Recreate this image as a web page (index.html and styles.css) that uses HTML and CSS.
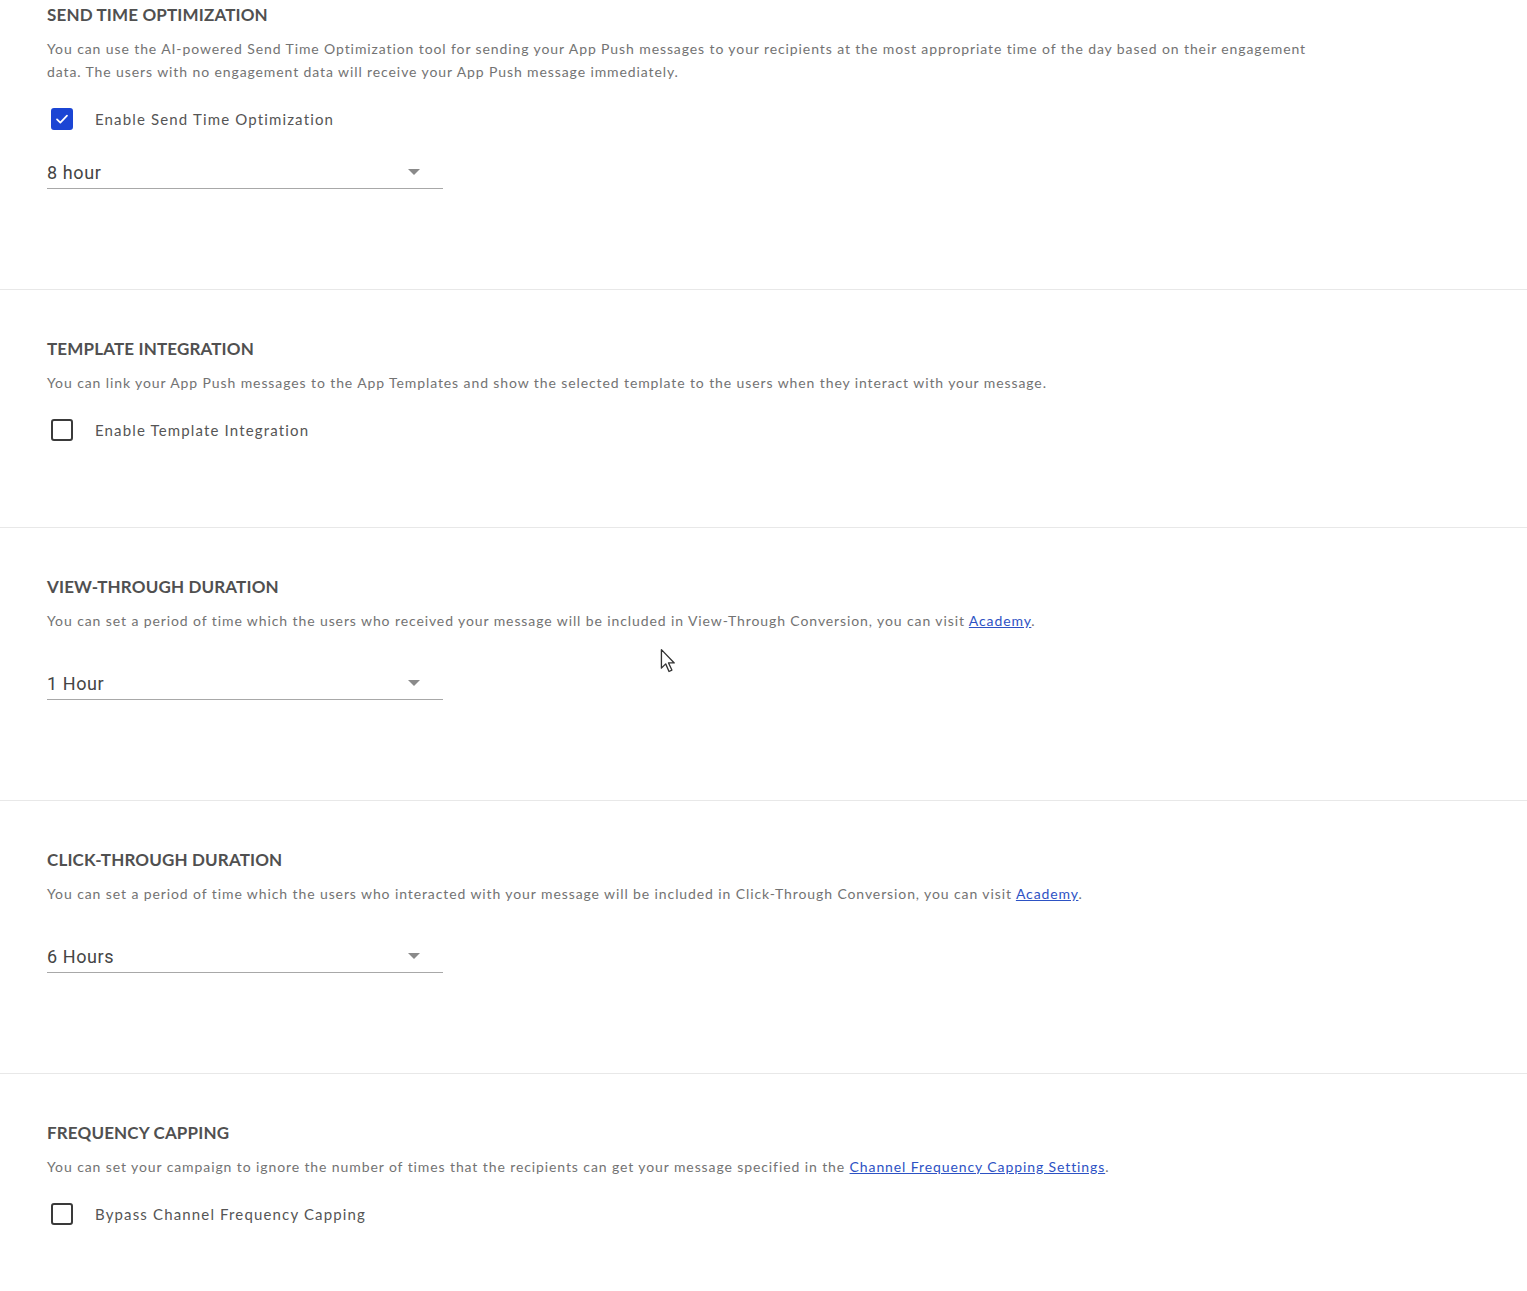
FILE: index.html
```html
<!DOCTYPE html>
<html lang="en">
<head>
  <meta charset="UTF-8">
  <meta name="viewport" content="width=device-width, initial-scale=1.0">
  <title>App Push Settings</title>
  <link rel="stylesheet" href="styles.css">
</head>
<body>

  <div class="settings">

    <div class="section first">
      <div class="section-title">SEND TIME OPTIMIZATION</div>
      <div class="section-desc">You can use the AI-powered Send Time Optimization tool for sending your App Push messages to your recipients at the most appropriate time of the day based on their engagement data. The users with no engagement data will receive your App Push message immediately.</div>
      <label class="check-row">
        <span class="checkbox checked">
          <svg viewBox="0 0 24 24" width="16" height="16"><path d="M4.5 12.5l5 5 10-10.5" fill="none" stroke="#fff" stroke-width="2.6" stroke-linecap="round" stroke-linejoin="round"/></svg>
        </span>
        <span class="check-label">Enable Send Time Optimization</span>
      </label>
      <div class="select">
        <span class="select-value">8 hour</span>
        <span class="select-arrow"></span>
      </div>
    </div>

    <div class="section">
      <div class="section-title">TEMPLATE INTEGRATION</div>
      <div class="section-desc">You can link your App Push messages to the App Templates and show the selected template to the users when they interact with your message.</div>
      <label class="check-row">
        <span class="checkbox"></span>
        <span class="check-label">Enable Template Integration</span>
      </label>
    </div>

    <div class="section">
      <div class="section-title">VIEW-THROUGH DURATION</div>
      <div class="section-desc">You can set a period of time which the users who received your message will be included in View-Through Conversion, you can visit <a href="#">Academy</a>.</div>
      <div class="select">
        <span class="select-value">1 Hour</span>
        <span class="select-arrow"></span>
      </div>
    </div>

    <div class="section">
      <div class="section-title">CLICK-THROUGH DURATION</div>
      <div class="section-desc">You can set a period of time which the users who interacted with your message will be included in Click-Through Conversion, you can visit <a href="#">Academy</a>.</div>
      <div class="select">
        <span class="select-value">6 Hours</span>
        <span class="select-arrow"></span>
      </div>
    </div>

    <div class="section last">
      <div class="section-title">FREQUENCY CAPPING</div>
      <div class="section-desc">You can set your campaign to ignore the number of times that the recipients can get your message specified in the <a href="#">Channel Frequency Capping Settings</a>.</div>
      <label class="check-row">
        <span class="checkbox"></span>
        <span class="check-label">Bypass Channel Frequency Capping</span>
      </label>
    </div>

  </div>

  <!-- mouse pointer from the capture -->
  <svg class="cursor" viewBox="0 0 20 28" width="19" height="27">
    <path d="M1.5 1.5 L1.5 21 L6 16.5 L9.5 24.5 L12.5 23 L9 15.5 L15 15.5 Z" fill="#fff" stroke="#333" stroke-width="1.4" stroke-linejoin="round"/>
  </svg>

</body>
</html>
```

FILE: styles.css
```css
body {
  margin: 0;
  background: #fff;
  font-family: 'Lato', 'Noto Sans', sans-serif;
  color: #6f6f6f;
  position: relative;
}
.settings {
  display: flex;
  flex-direction: column;
}
.section {
  padding: 47px 47px 0 47px;
  border-bottom: 1px solid #e8e8e8;
  display: flex;
  flex-direction: column;
  align-items: flex-start;
  box-sizing: border-box;
}
.section.first {
  padding-top: 3px;
  height: 290px;
}
.section:nth-child(2) {
  height: 238px;
}
.section:nth-child(3),
.section:nth-child(4) {
  height: 273px;
}
.section.last {
  border-bottom: none;
  height: 218px;
}
.section-title {
  font-size: 17px;
  font-weight: 700;
  color: #505050;
  line-height: 24px;
  letter-spacing: 0.15px;
}
.section-desc {
  margin-top: 10px;
  font-size: 14px;
  line-height: 23px;
  letter-spacing: 0.9px;
  max-width: 1275px;
  color: #737373;
}
.section-desc a {
  color: #2d52c4;
  text-decoration: underline;
}
.check-row {
  display: flex;
  align-items: center;
  margin-top: 24px;
  height: 24px;
  cursor: pointer;
}
.checkbox {
  width: 18px;
  height: 18px;
  border: 2px solid #3a3a3a;
  border-radius: 3px;
  margin-left: 4px;
  display: flex;
  align-items: center;
  justify-content: center;
}
.checkbox.checked {
  background: #1b45d4;
  border-color: #1b45d4;
}
.check-label {
  margin-left: 22px;
  font-size: 15px;
  letter-spacing: 1.15px;
  color: #555;
}
.select {
  width: 396px;
  height: 32px;
  margin-top: 25px;
  border-bottom: 1px solid #a8a8a8;
  display: flex;
  align-items: center;
  justify-content: space-between;
  font-family: 'Roboto', 'Liberation Sans', sans-serif;
}
.section:nth-child(3) .select,
.section:nth-child(4) .select {
  margin-top: 35px;
}
.select-value {
  font-size: 18px;
  letter-spacing: 0.6px;
  color: #444;
}
.select-arrow {
  width: 0;
  height: 0;
  border-left: 6px solid transparent;
  border-right: 6px solid transparent;
  border-top: 6px solid #8a8a8a;
  margin-right: 23px;
}
.cursor {
  position: absolute;
  left: 660px;
  top: 648px;
}
```
